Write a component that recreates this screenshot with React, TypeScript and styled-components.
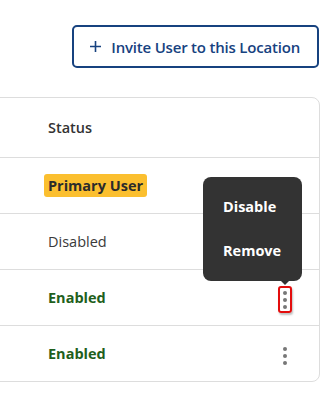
import React from 'react'
import styled, { createGlobalStyle } from 'styled-components'

const GlobalStyle = createGlobalStyle`
  html, body {
    margin: 0;
    padding: 0;
    background: #ffffff;
    overflow: hidden;
  }
  body {
    font-family: 'Open Sans', Lato, sans-serif;
    color: #333333;
  }
`

const Page = styled.div`
  display: flex;
  flex-direction: column;
  align-items: flex-end;
  width: 335px;
  padding-top: 25px;
`

const InviteButton = styled.button`
  display: flex;
  align-items: center;
  gap: 10px;
  height: 43px;
  margin-right: 16px;
  padding: 0 17px 0 16px;
  background: #ffffff;
  border: 2px solid #17427f;
  border-radius: 5px;
  font-family: 'Open Sans', sans-serif;
  font-weight: 600;
  font-size: 15px;
  letter-spacing: -0.2px;
  color: #17427f;
  cursor: pointer;
`

const Card = styled.div`
  align-self: flex-start;
  margin: 29px 0 0 -8px;
  width: 326px;
  border: 1px solid #dddddd;
  border-radius: 8px;
  background: #ffffff;
`

const Row = styled.div<{ $header?: boolean }>`
  display: grid;
  grid-template-columns: 55px 1fr 50px;
  align-items: center;
  height: ${(p) => (p.$header ? '59px' : '55px')};
  border-top: ${(p) => (p.$header ? 'none' : '1px solid #dddddd')};
`

const HeaderLabel = styled.div`
  grid-column: 2;
  font-size: 14.5px;
  font-weight: 600;
  color: #333333;
`

const StatusText = styled.div<{ $tone: 'enabled' | 'disabled' }>`
  grid-column: 2;
  font-size: 14.5px;
  font-weight: ${(p) => (p.$tone === 'enabled' ? 700 : 400)};
  color: ${(p) => (p.$tone === 'enabled' ? '#1f5f1c' : '#3a3a3a')};
`

const Badge = styled.span`
  grid-column: 2;
  justify-self: start;
  margin-left: -4px;
  padding: 3px 4px 3px;
  background: #fbbf2f;
  border-radius: 3px;
  font-size: 14.5px;
  font-weight: 700;
  color: #2b2b2b;
  line-height: 17px;
`

const MenuCell = styled.div`
  grid-column: 3;
  position: relative;
  justify-self: start;
  margin: 4px 0 0 9px;
`

const Kebab = styled.div<{ $active?: boolean }>`
  display: flex;
  flex-direction: column;
  align-items: center;
  justify-content: center;
  gap: 3px;
  width: 14px;
  height: 27px;
  box-sizing: border-box;
  border: 2px solid ${(p) => (p.$active ? '#e30d0d' : 'transparent')};
  border-radius: 3px;
  box-shadow: ${(p) => (p.$active ? '1px 2px 2px rgba(0,0,0,0.25)' : 'none')};
`

const Dot = styled.span`
  width: 4px;
  height: 4px;
  border-radius: 50%;
  background: #777777;
`

const Menu = styled.div`
  position: absolute;
  right: -10px;
  bottom: calc(100% + 5px);
  width: 99px;
  padding: 8px 0;
  background: #333333;
  border-radius: 8px;
  z-index: 2;

  &::after {
    content: '';
    position: absolute;
    right: 13px;
    bottom: -4px;
    border-left: 4px solid transparent;
    border-right: 4px solid transparent;
    border-top: 4px solid #333333;
  }
`

const MenuItem = styled.div`
  padding: 12px 20px;
  font-size: 14.5px;
  font-weight: 700;
  line-height: 20px;
  color: #ffffff;
`

const KebabMenu = ({ open }: { open?: boolean }) => (
  <MenuCell>
    {open && (
      <Menu>
        <MenuItem>Disable</MenuItem>
        <MenuItem>Remove</MenuItem>
      </Menu>
    )}
    <Kebab $active={open}>
      <Dot />
      <Dot />
      <Dot />
    </Kebab>
  </MenuCell>
)

const App = () => (
  <>
    <GlobalStyle />
    <Page>
      <InviteButton>
        <svg width="11" height="11" viewBox="0 0 11 11">
          <path d="M5.5 0v11M0 5.5h11" stroke="#17427f" strokeWidth="1.6" />
        </svg>
        Invite User to this Location
      </InviteButton>
      <Card>
        <Row $header>
          <HeaderLabel>Status</HeaderLabel>
        </Row>
        <Row>
          <Badge>Primary User</Badge>
        </Row>
        <Row>
          <StatusText $tone="disabled">Disabled</StatusText>
        </Row>
        <Row>
          <StatusText $tone="enabled">Enabled</StatusText>
          <KebabMenu open />
        </Row>
        <Row>
          <StatusText $tone="enabled">Enabled</StatusText>
          <KebabMenu />
        </Row>
      </Card>
    </Page>
  </>
)

export default App
